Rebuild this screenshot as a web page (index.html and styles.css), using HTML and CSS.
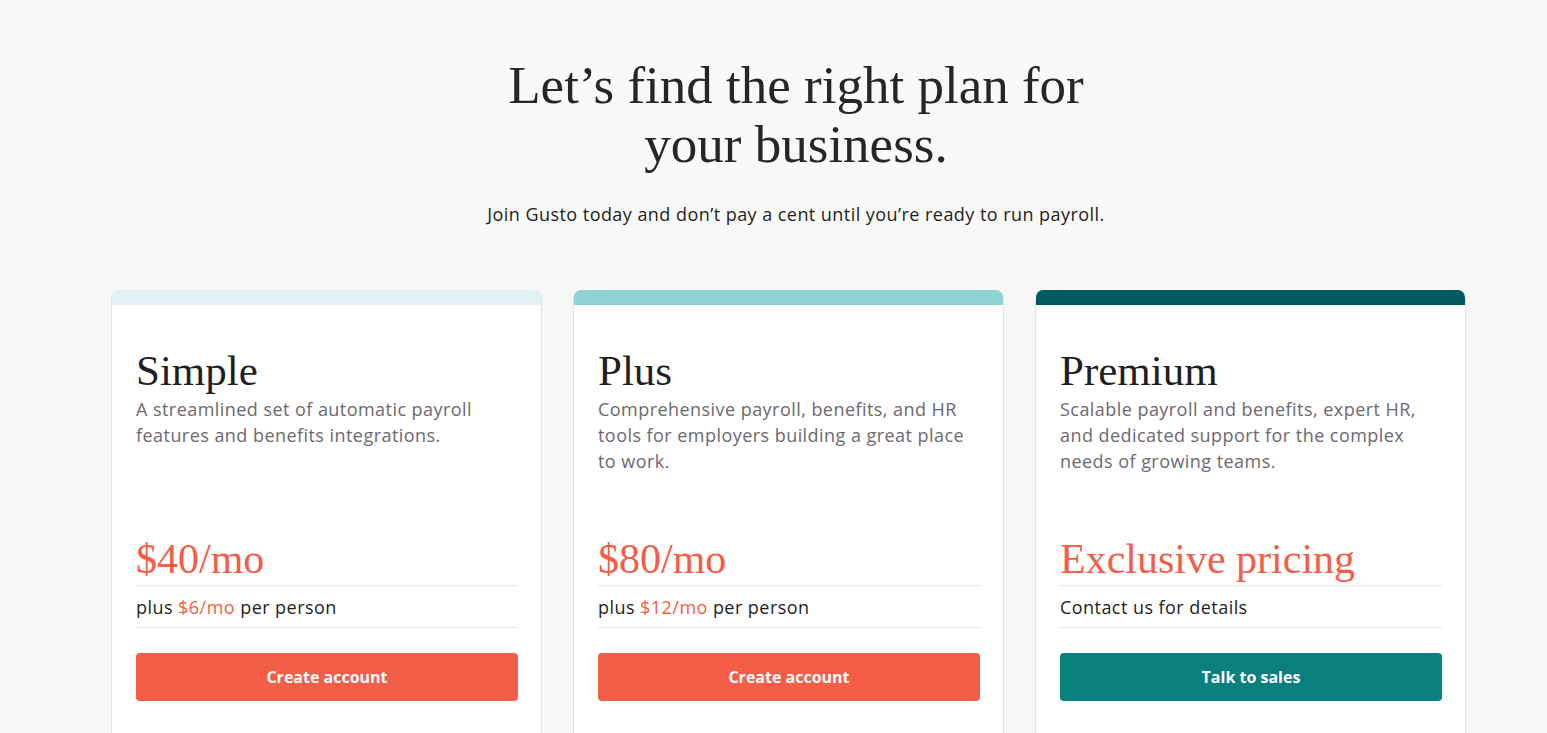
FILE: index.html
```html
<!DOCTYPE html>
<html lang="en">
<head>
<meta charset="utf-8">
<title>Gusto pricing</title>
<link rel="stylesheet" href="styles.css">
</head>
<body>
<main class="page">
  <header class="hero">
    <h1 class="hero-title">Let’s find the right plan for<br>your business.</h1>
    <p class="hero-sub">Join Gusto today and don’t pay a cent until you’re ready to run payroll.</p>
  </header>
  <section class="plans">
    <article class="plan plan-simple">
      <div class="plan-bar"></div>
      <div class="plan-body">
        <h2 class="plan-name">Simple</h2>
        <p class="plan-desc">A streamlined set of automatic payroll features and benefits integrations.</p>
        <div class="plan-price">$40/mo</div>
        <div class="plan-extra">plus <span class="accent">$6/mo</span> per person</div>
        <a class="plan-btn btn-coral" href="#">Create account</a>
      </div>
    </article>
    <article class="plan plan-plus">
      <div class="plan-bar"></div>
      <div class="plan-body">
        <h2 class="plan-name">Plus</h2>
        <p class="plan-desc">Comprehensive payroll, benefits, and HR tools for employers building a great place to work.</p>
        <div class="plan-price">$80/mo</div>
        <div class="plan-extra">plus <span class="accent">$12/mo</span> per person</div>
        <a class="plan-btn btn-coral" href="#">Create account</a>
      </div>
    </article>
    <article class="plan plan-premium">
      <div class="plan-bar"></div>
      <div class="plan-body">
        <h2 class="plan-name">Premium</h2>
        <p class="plan-desc">Scalable payroll and benefits, expert HR, and dedicated support for the complex needs of growing teams.</p>
        <div class="plan-price">Exclusive pricing</div>
        <div class="plan-extra">Contact us for details</div>
        <a class="plan-btn btn-teal" href="#">Talk to sales</a>
      </div>
    </article>
  </section>
</main>
</body>
</html>
```
FILE: styles.css
```css
html, body {
  margin: 0;
  padding: 0;
  background: #faf9f9;
  height: 100%;
  overflow: hidden;
}
body {
  font-family: "Open Sans", "Liberation Sans", sans-serif;
  color: #1e1e22;
}
.page {
  width: 1355px;
  margin-left: 111px;
}
.hero {
  padding-left: 15px;
  text-align: center;
}
.hero-title {
  margin: 0;
  padding-top: 56px;
  font-family: "Liberation Serif", serif;
  font-weight: 400;
  font-size: 53px;
  line-height: 59px;
  color: #262626;
}
.hero-sub {
  margin: 27px 0 0;
  font-size: 18px;
  letter-spacing: 0.45px;
  line-height: 26px;
  color: #1e1e22;
}
.plans {
  display: grid;
  grid-template-columns: repeat(3, 431px);
  column-gap: 31px;
  margin-top: 63px;
}
.plan {
  background: #fff;
  border-radius: 8px 8px 0 0;
  border: 1px solid #e4e3e3;
  border-top: 0;
  overflow: hidden;
  height: 460px;
  box-shadow: 0 0 24px rgba(0,0,0,0.025);
}
.plan-bar {
  height: 15px;
  margin: 0 -1px;
}
.plan-simple .plan-bar { background: #e1f1f4; }
.plan-plus .plan-bar { background: #90d3d4; }
.plan-premium .plan-bar { background: #005a5f; }
.plan-body {
  padding: 41px 23px 0 24px;
  display: flex;
  flex-direction: column;
}
.plan-name {
  margin: 0;
  font-family: "Liberation Serif", serif;
  font-weight: 400;
  font-size: 43px;
  line-height: 50px;
  color: #1f1f1f;
}
.plan-desc {
  margin: 0;
  height: 78px;
  font-size: 18px;
  letter-spacing: 0.45px;
  line-height: 26px;
  color: #6c6970;
}
.plan-price {
  margin-top: 60px;
  font-family: "Liberation Serif", serif;
  font-size: 42px;
  line-height: 51px;
  color: #f45d48;
  border-bottom: 1px solid #e9e8e8;
}
.plan-extra {
  padding: 8px 0 7px;
  font-size: 18px;
  letter-spacing: 0.45px;
  line-height: 26px;
  color: #1e1e22;
  border-bottom: 1px solid #e9e8e8;
}
.accent {
  color: #f45d48;
}
.plan-btn {
  display: block;
  margin-top: 25px;
  height: 48px;
  line-height: 48px;
  border-radius: 4px;
  text-align: center;
  text-decoration: none;
  color: #fff;
  font-weight: 700;
  font-size: 16px;
}
.btn-coral { background: #f45d48; }
.btn-teal { background: #0a807e; }
```
